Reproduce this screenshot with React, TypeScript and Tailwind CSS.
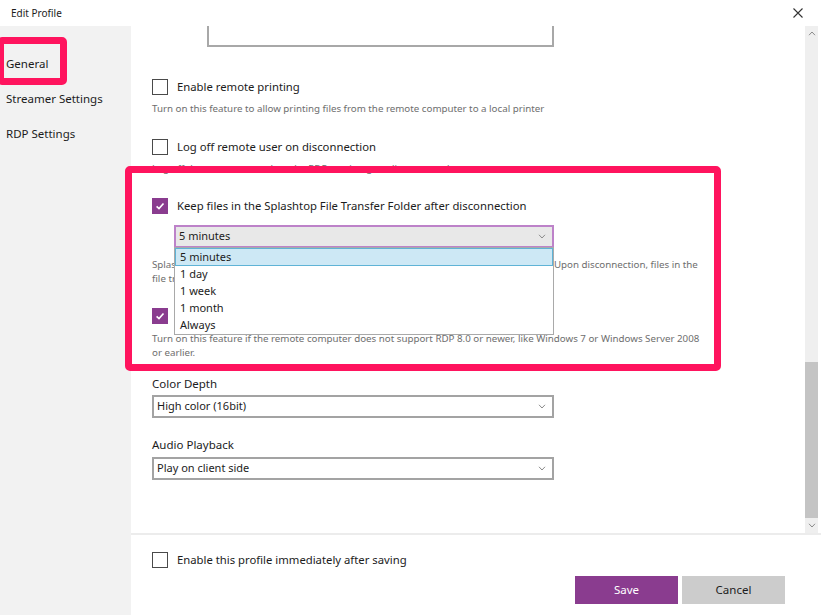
import React from 'react';

const Chevron = ({ up }: { up?: boolean }) => (
  <svg viewBox="0 0 8 5" className="h-[5px] w-[8px]">
    <path d={up ? 'M1 4.2 L4 1 L7 4.2' : 'M1 0.8 L4 4 L7 0.8'} fill="none" stroke="#8a8a8a" strokeWidth="1" />
  </svg>
);

const Box = ({ checked }: { checked?: boolean }) =>
  checked ? (
    <span className="flex h-4 w-4 shrink-0 items-center justify-center bg-[#8a3c8f]">
      <svg viewBox="0 0 12 12" className="h-3 w-3">
        <path d="M2.6 6.3 L5 8.6 L9.5 3.4" fill="none" stroke="white" strokeWidth="1.6" />
      </svg>
    </span>
  ) : (
    <span className="h-4 w-4 shrink-0 border-[1.5px] border-[#4a4a4a] bg-white" />
  );

const CheckRow = ({ label, checked, className = '' }: { label: string; checked?: boolean; className?: string }) => (
  <div className={`flex h-4 items-center gap-[9px] ${className}`}>
    <Box checked={checked} />
    <span className="text-[11.3px] text-[#1c1c1c]">{label}</span>
  </div>
);

const Select = ({ value, active }: { value: string; active?: boolean }) => (
  <div
    className={`flex h-[23px] items-center justify-between border-2 pl-[3px] pr-[6px] text-[11px] text-[#1c1c1c] ${
      active ? 'border-[#bd82c9] bg-[#e8e8e8]' : 'border-[#a3a3a3] bg-white'
    }`}
  >
    <span>{value}</span>
    <Chevron />
  </div>
);

const options = ['5 minutes', '1 day', '1 week', '1 month', 'Always'];

export default function App() {
  return (
    <div className="relative flex h-[615px] w-[821px] flex-col overflow-hidden bg-white font-['Noto_Sans',sans-serif]">
      {/* title bar */}
      <div className="flex h-[26px] shrink-0 items-center justify-between pl-[11px] pr-[18px]">
        <span className="text-[10px] text-[#1c1c1c]">Edit Profile</span>
        <svg viewBox="0 0 10 10" className="h-[10px] w-[10px]">
          <path d="M0.5 0.5 L9.5 9.5 M9.5 0.5 L0.5 9.5" stroke="#333" strokeWidth="1.1" />
        </svg>
      </div>

      <div className="flex min-h-0 flex-1">
        {/* sidebar */}
        <div className="flex w-[131px] shrink-0 flex-col gap-[19px] bg-[#f2f2f2] pl-[6px] pt-[30px] text-[11.5px] leading-[16px] text-[#1c1c1c]">
          <span>General</span>
          <span>Streamer Settings</span>
          <span>RDP Settings</span>
        </div>

        {/* main */}
        <div className="flex min-w-0 flex-1 flex-col">
          <div className="flex h-[507px] shrink-0">
            <div className="relative flex-1 pl-[21px]">
              <div className="ml-[55px] h-[21px] w-[347px] border-x-2 border-b-2 border-[#a8a8a8]" />

              <CheckRow className="mt-[32px]" label="Enable remote printing" />
              <p className="mt-[7px] text-[9.75px] leading-[14px] text-[#6e6e6e]">
                Turn on this feature to allow printing files from the remote computer to a local printer
              </p>

              <CheckRow className="mt-[23px]" label="Log off remote user on disconnection" />
              <p className="mt-[7px] text-[9.75px] leading-[14px] text-[#6e6e6e]">
                Log off the remote user when the RDP session gets disconnected
              </p>

              <CheckRow checked className="mt-[22px]" label="Keep files in the Splashtop File Transfer Folder after disconnection" />
              <div className="relative ml-[22px] mt-[11px] w-[380px]">
                <Select active value="5 minutes" />
                <div className="absolute left-0 right-0 top-[22px] z-10 border border-[#a9a9a9] bg-white text-[11px] text-[#1c1c1c]">
                  {options.map((o, i) => (
                    <div
                      key={o}
                      className={`flex items-center pl-[4px] ${
                        i === 0 ? 'h-[18px] border border-[#5fb3d6] bg-[#cde8f5]' : 'h-[17px] border border-transparent'
                      }`}
                    >
                      {o}
                    </div>
                  ))}
                </div>
              </div>
              <p className="mt-[10px] whitespace-nowrap text-[9.75px] leading-[14px] text-[#6e6e6e]">
                Splashtop stores all transferred files in the File Transfer Folder on the remote computer. Upon disconnection, files in the
                <br />
                file transfer folder will be kept for the period selected above.
              </p>

              <CheckRow checked className="mt-[22px]" label="Use RDP legacy mode" />
              <p className="mt-[8px] text-[9.75px] leading-[14px] text-[#6e6e6e]">
                Turn on this feature if the remote computer does not support RDP 8.0 or newer, like Windows 7 or Windows Server 2008
                <br />
                or earlier.
              </p>

              <p className="mt-[16px] text-[11.5px] leading-[16px] text-[#1c1c1c]">Color Depth</p>
              <div className="mt-[3px] w-[402px]">
                <Select value="High color (16bit)" />
              </div>

              <p className="mt-[19px] text-[11.5px] leading-[16px] text-[#1c1c1c]">Audio Playback</p>
              <div className="mt-[4px] w-[402px]">
                <Select value="Play on client side" />
              </div>
            </div>

            {/* scrollbar */}
            <div className="flex w-[13px] shrink-0 flex-col items-center bg-[#efefef]">
              <div className="flex h-[15px] items-center justify-center">
                <Chevron up />
              </div>
              <div className="flex-1" />
              <div className="h-[156px] w-full bg-[#c4c4c4]" />
              <div className="flex h-[15px] items-center justify-center">
                <Chevron />
              </div>
            </div>
            <div className="w-[3px] shrink-0" />
          </div>

          {/* footer */}
          <div className="flex flex-1 flex-col border-t-2 border-[#ececec] pl-[21px] pr-[36px]">
            <CheckRow className="mt-[17px]" label="Enable this profile immediately after saving" />
            <div className="mt-[8px] flex justify-end gap-[4px] text-[11.5px]">
              <button className="h-[28px] w-[103px] bg-[#8a3c8f] text-white">Save</button>
              <button className="h-[28px] w-[103px] bg-[#cccccc] text-[#1c1c1c]">Cancel</button>
            </div>
          </div>
        </div>
      </div>

      {/* annotation highlights */}
      <div className="absolute left-[-3px] top-[37px] h-[48px] w-[70px] rounded-[5px] border-[7px] border-[#ff145e]" />
      <div className="absolute left-[125px] top-[166px] h-[205px] w-[596px] rounded-[5px] border-[7px] border-[#ff145e]" />
    </div>
  );
}
